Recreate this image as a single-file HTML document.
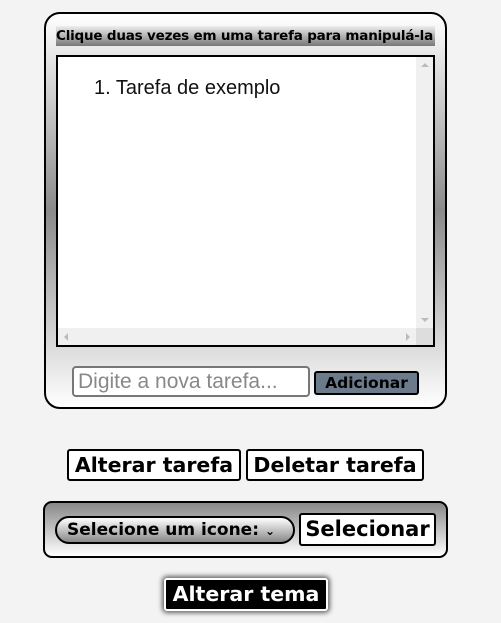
<!DOCTYPE html><html><head><style>
body{margin:0;width:501px;height:623px;background:#f3f3f3;font-family:"DejaVu Sans","Liberation Sans",sans-serif;position:relative;overflow:hidden}
.a{position:absolute;box-sizing:border-box}
</style></head><body>
<div class="a" style="left:44px;top:12px;width:403px;height:397px;border:2px solid #000;border-radius:16px;background:linear-gradient(#fff 0%,#8a8a8a 50%,#fff 100%)"></div>
<div class="a" style="left:56px;top:26px;width:379px;height:20px;background:linear-gradient(#eee,#777);font-weight:bold;font-size:13.5px;line-height:20px;white-space:nowrap;overflow:hidden;letter-spacing:-0.2px">Clique duas vezes em uma tarefa para manipulá-la</div>
<div class="a" style="left:56px;top:55px;width:379px;height:292px;border:2px solid #000;background:#fff">
<div class="a" style="left:36px;top:20px;font-family:'Liberation Sans',sans-serif;font-size:20px;color:#111">1. Tarefa de exemplo</div>
<div class="a" style="right:0;top:0;width:17px;height:271px;background:#f0f0f0"><div style="position:absolute;left:5px;top:6px;border:4px solid transparent;border-bottom-color:#bbb;border-top:0"></div><div style="position:absolute;left:5px;bottom:6px;border:4px solid transparent;border-top-color:#bbb;border-bottom:0"></div></div>
<div class="a" style="left:0;bottom:0;width:358px;height:17px;background:#f0f0f0"><div style="position:absolute;left:6px;top:5px;border:4px solid transparent;border-right-color:#bbb;border-left:0"></div><div style="position:absolute;right:6px;top:5px;border:4px solid transparent;border-left-color:#bbb;border-right:0"></div></div>
<div class="a" style="right:0;bottom:0;width:17px;height:17px;background:#ddd"></div>
</div>
<div class="a" style="left:72px;top:366px;width:238px;height:31px;border:2px solid #777;border-radius:4px;background:#fff;color:#888;font-size:21px;line-height:27px;padding-left:4px;font-family:'Liberation Sans',sans-serif;white-space:nowrap;overflow:hidden">Digite a nova tarefa...</div>
<div class="a" style="left:314px;top:371px;width:105px;height:24px;border:2px solid #000;border-radius:3px;background:#6b7b8c;font-weight:bold;font-size:15.5px;line-height:20px;text-align:center">Adicionar</div>
<div class="a" style="left:67px;top:449px;width:174px;height:32px;border:2px solid #000;border-radius:3px;background:#fff;font-weight:bold;font-size:20.5px;line-height:28px;text-align:center;white-space:nowrap">Alterar tarefa</div>
<div class="a" style="left:246px;top:449px;width:178px;height:32px;border:2px solid #000;border-radius:3px;background:#fff;font-weight:bold;font-size:20.5px;line-height:28px;text-align:center;white-space:nowrap">Deletar tarefa</div>
<div class="a" style="left:43px;top:501px;width:405px;height:57px;border:2px solid #000;border-radius:9px;background:linear-gradient(#888,#fff)"></div>
<div class="a" style="left:55px;top:516px;width:240px;height:28px;border:2px solid #000;border-radius:14px;background:linear-gradient(#fff,#888);font-weight:bold;font-size:17px;line-height:24px;padding-left:10px;white-space:nowrap;overflow:hidden">Selecione um icone: <span style="font-size:12px">⌄</span></div>
<div class="a" style="left:299px;top:513px;width:137px;height:33px;border:2px solid #000;border-radius:3px;background:#fff;font-weight:bold;font-size:21px;line-height:29px;text-align:center">Selecionar</div>
<div class="a" style="left:164px;top:578px;width:164px;height:33px;border:2px solid #fff;border-radius:3px;background:#000;color:#fff;font-weight:bold;font-size:20.5px;line-height:29px;text-align:center;box-shadow:0 0 5px 2px #666;white-space:nowrap">Alterar tema</div>
</body></html>
